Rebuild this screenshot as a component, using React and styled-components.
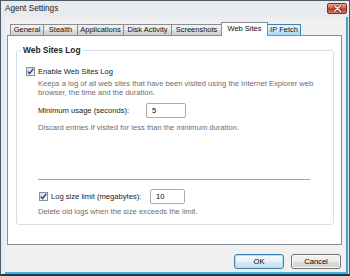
import React from "react";
import styled, { createGlobalStyle } from "styled-components";

const Global = createGlobalStyle`
  html, body { margin: 0; padding: 0; background: #fff; }
  body { width: 350px; height: 276px; overflow: hidden; font-family: "Liberation Sans", Arial, sans-serif; }
  * { box-sizing: border-box; }
`;

const Window = styled.div`
  width: 350px;
  height: 276px;
  display: flex;
  flex-direction: column;
  background: #e7eaee;
  border: 1px solid #4d5a66;
  border-bottom: 2px solid #1d3a4a;
`;

const TitleBar = styled.div`
  height: 16px;
  flex: none;
  display: flex;
  justify-content: space-between;
  padding: 0 2px 0 4px;
`;

const Title = styled.span`
  font-size: 8.2px;
  line-height: 15px;
  color: #1a1a1a;
`;

const CloseButton = styled.div`
  width: 20px;
  height: 11px;
  margin-top: 2px;
  border: 1px solid #7a3226;
  border-radius: 2px;
  background: linear-gradient(#e9a997, #cf5f49 48%, #b9381f 52%, #d57a63);
  display: flex;
  align-items: center;
  justify-content: center;
`;

const Client = styled.div`
  flex: 1;
  display: flex;
  flex-direction: column;
  margin: 0 1px 0 4px;
  background: #f0f0f0;
  border-right: 2px solid #3aa6c8;
  border-bottom: 2px solid #3fb6da;
  padding: 5px 4px 0 2px;
`;

const TabStrip = styled.div`
  height: 13px;
  display: flex;
  align-items: flex-end;
  padding-left: 3px;
  position: relative;
  z-index: 1;
`;

const Tab = styled.div`
  width: ${(p) => p.$w}px;
  height: ${(p) => (p.$active ? 14 : 11)}px;
  margin-bottom: ${(p) => (p.$active ? -1 : 0)}px;
  margin-right: -1px;
  border: 1px solid ${(p) => (p.$hover ? "#3c7fb1" : "#898c95")};
  border-bottom: 0;
  background: ${(p) =>
    p.$active
      ? "#ffffff"
      : p.$hover
      ? "linear-gradient(#eaf6fd, #d9f0fc 50%, #bee6fd 51%, #a7d9f5)"
      : "linear-gradient(#f2f2f2, #ebebeb 50%, #dddddd 51%, #cfcfcf)"};
  position: relative;
  z-index: ${(p) => (p.$active ? 2 : 1)};
  font-size: 7.5px;
  line-height: ${(p) => (p.$active ? 11 : 10)}px;
  color: #111;
  text-align: center;
  white-space: nowrap;
`;

const Panel = styled.div`
  height: 210px;
  flex: none;
  border: 1px solid #898c95;
  background: #fff;
  padding: 9px 7px 0 8px;
`;

const GroupBox = styled.fieldset`
  margin: 0;
  width: 318px;
  border: 1px solid #d5dfe5;
  border-radius: 3px;
  padding: 0 0 8px 9px;
  min-width: 0;
`;

const Legend = styled.legend`
  font-size: 8.4px;
  font-weight: bold;
  line-height: 10px;
  padding: 0 2px;
  margin-left: -5px;
  color: #1e1e1e;
`;

const CheckRow = styled.label`
  display: flex;
  align-items: center;
  height: 10px;
  margin-top: ${(p) => p.$mt || 0}px;
  margin-left: ${(p) => p.$ml || 0}px;
  gap: 3px;
  font-size: 7.6px;
  color: #1a1a1a;
  white-space: nowrap;
`;

const Box = styled.span`
  width: 9px;
  height: 9px;
  flex: none;
  border: 1px solid #8f8f8f;
  background: linear-gradient(135deg, #dcdcdc, #fbfbfb);
  display: flex;
  align-items: center;
  justify-content: center;
`;

const Note = styled.p`
  margin: ${(p) => p.$mt || 0}px 0 0 12px;
  font-size: 7.6px;
  line-height: 9px;
  color: #6d6d6d;
  width: 295px;
`;

const FieldRow = styled.div`
  display: flex;
  align-items: center;
  margin-top: ${(p) => p.$mt || 0}px;
  margin-left: ${(p) => p.$ml || 0}px;
`;

const FieldLabel = styled.span`
  width: ${(p) => p.$w}px;
  flex: none;
  font-size: 7.6px;
  color: #1a1a1a;
  white-space: nowrap;
`;

const Input = styled.div`
  width: ${(p) => p.$w}px;
  height: ${(p) => p.$h}px;
  border: 1px solid #abadb3;
  border-radius: 2px;
  background: #fff;
  font-size: 7.6px;
  line-height: ${(p) => p.$h - 2}px;
  padding-left: 5px;
  color: #000;
`;

const Separator = styled.div`
  height: 1px;
  width: 272px;
  margin: 47px 0 0 12px;
  background: #a0a0a0;
`;

const ButtonRow = styled.div`
  display: flex;
  justify-content: flex-end;
  gap: 7px;
  margin-top: 9px;
  padding-right: 1px;
`;

const Button = styled.div`
  width: ${(p) => p.$w}px;
  height: 15px;
  border: 1px solid ${(p) => (p.$focus ? "#3c7fb1" : "#707070")};
  border-radius: 3px;
  background: ${(p) =>
    p.$focus
      ? "linear-gradient(#f4fafd, #e6f2f9 50%, #d6e9f4 51%, #c9e1f0)"
      : "linear-gradient(#f2f2f2, #ebebeb 50%, #dddddd 51%, #cfcfcf)"};
  box-shadow: inset 0 0 0 1px ${(p) => (p.$focus ? "#a8e4f8" : "#fcfcfc")};
  font-size: 7.6px;
  line-height: 13px;
  text-align: center;
  color: #000;
`;

const Check = () => (
  <svg width="7" height="7" viewBox="0 0 7 7">
    <path d="M0.8 3.6 L2.6 5.6 L6.2 0.8" fill="none" stroke="#1f4f9e" strokeWidth="1.5" />
  </svg>
);

const CloseGlyph = () => (
  <svg width="9" height="7" viewBox="0 0 9 7">
    <path d="M1.5 0.8 L7.5 6.2 M7.5 0.8 L1.5 6.2" stroke="#5a1a10" strokeWidth="2.6" strokeLinecap="round" />
    <path d="M1.5 0.8 L7.5 6.2 M7.5 0.8 L1.5 6.2" stroke="#ffffff" strokeWidth="1.4" strokeLinecap="round" />
  </svg>
);

const tabs = [
  { label: "General", w: 34 },
  { label: "Stealth", w: 35 },
  { label: "Applications", w: 47 },
  { label: "Disk Activity", w: 49 },
  { label: "Screenshots", w: 51 },
  { label: "Web Sites", w: 47, active: true },
  { label: "IP Fetch", w: 34, hover: true },
];

export default function App() {
  return (
    <>
      <Global />
      <Window>
        <TitleBar>
          <Title>Agent Settings</Title>
          <CloseButton>
            <CloseGlyph />
          </CloseButton>
        </TitleBar>
        <Client>
          <TabStrip>
            {tabs.map((t) => (
              <Tab key={t.label} $w={t.w} $active={t.active} $hover={t.hover}>
                {t.label}
              </Tab>
            ))}
          </TabStrip>
          <Panel>
            <GroupBox>
              <Legend>Web Sites Log</Legend>
              <CheckRow $mt={11}>
                <Box>
                  <Check />
                </Box>
                Enable Web Sites Log
              </CheckRow>
              <Note $mt={3}>
                Keeps a log of all web sites that have been visited using the Internet Explorer web
                browser, the time and the duration.
              </Note>
              <FieldRow $mt={6} $ml={12}>
                <FieldLabel $w={108}>Minimum usage (seconds):</FieldLabel>
                <Input $w={40} $h={15}>5</Input>
              </FieldRow>
              <Note $mt={5}>Discard entries if visited for less than the minimum duration.</Note>
              <Separator />
              <FieldRow $mt={9} $ml={13}>
                <CheckRow as="span">
                  <Box>
                    <Check />
                  </Box>
                  <FieldLabel $w={99}>Log size limit (megabytes):</FieldLabel>
                </CheckRow>
                <Input $w={35} $h={15}>10</Input>
              </FieldRow>
              <Note $mt={3}>Delete old logs when the size exceeds the limit.</Note>
            </GroupBox>
          </Panel>
          <ButtonRow>
            <Button $w={50} $focus>OK</Button>
            <Button $w={50}>Cancel</Button>
          </ButtonRow>
        </Client>
      </Window>
    </>
  );
}
